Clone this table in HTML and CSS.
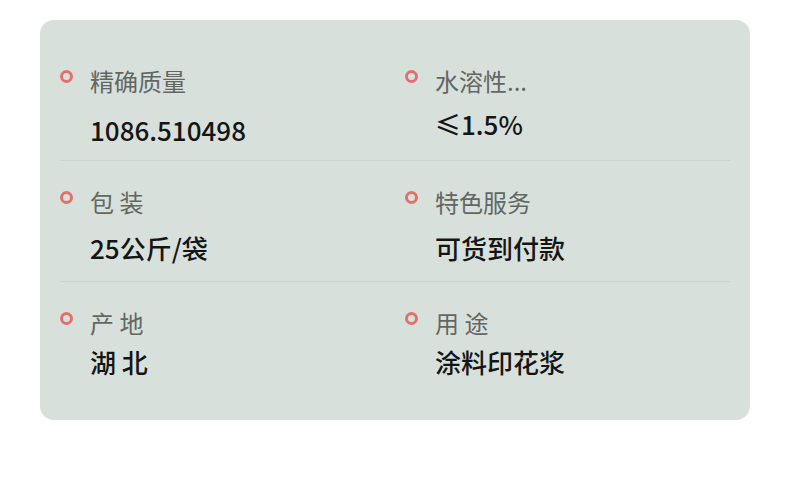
FILE: index.html
```html
<!DOCTYPE html>
<html lang="zh-CN">
<head>
<meta charset="utf-8">
<link rel="stylesheet" href="styles.css">
</head>
<body>
<div class="card">
  <div class="row row-1">
    <div class="cell">
      <div class="label"><span class="dot"></span>精确质量</div>
      <div class="value v-14">1086.510498</div>
    </div>
    <div class="cell">
      <div class="label"><span class="dot"></span>水溶性...</div>
      <div class="value v-8">≤1.5%</div>
    </div>
  </div>
  <div class="row row-2">
    <div class="cell">
      <div class="label"><span class="dot"></span>包 装</div>
      <div class="value v-11">25公斤/袋</div>
    </div>
    <div class="cell">
      <div class="label"><span class="dot"></span>特色服务</div>
      <div class="value v-11">可货到付款</div>
    </div>
  </div>
  <div class="row row-3">
    <div class="cell">
      <div class="label"><span class="dot"></span>产 地</div>
      <div class="value v-4">湖 北</div>
    </div>
    <div class="cell">
      <div class="label"><span class="dot"></span>用 途</div>
      <div class="value v-4">涂料印花浆</div>
    </div>
  </div>
</div>
</body>
</html>
```

FILE: styles.css
```css
html, body {
  margin: 0;
  padding: 0;
  background: #ffffff;
}
body {
  font-family: "Noto Sans CJK SC", "Noto Sans", sans-serif;
}
.card {
  margin: 20px 40px 0;
  width: 710px;
  height: 400px;
  box-sizing: border-box;
  padding: 0 20px;
  background: #d8e0db;
  border-radius: 14px;
}
.row {
  display: grid;
  grid-template-columns: 345px 1fr;
  border-bottom: 1px solid #cbd3ce;
}
.row-1 { padding: 44px 0 12px; }
.row-2 { padding: 24px 0 15px; }
.row-3 { padding: 24px 0 0; border-bottom: none; }
.label {
  display: flex;
  align-items: center;
  font-size: 24px;
  line-height: 34px;
  color: #626764;
  white-space: nowrap;
}
.dot {
  width: 13px;
  height: 13px;
  box-sizing: border-box;
  border: 3px solid #e0716f;
  border-radius: 50%;
  margin: -10px 17px 0 0;
  flex: none;
}
.value {
  padding-left: 30px;
  font-size: 26px;
  font-weight: 500;
  line-height: 36px;
  color: #151515;
  white-space: nowrap;
}
.v-14 { margin-top: 14px; }
.v-8 { margin-top: 8px; }
.v-11 { margin-top: 11px; }
.v-4 { margin-top: 4px; }
```
